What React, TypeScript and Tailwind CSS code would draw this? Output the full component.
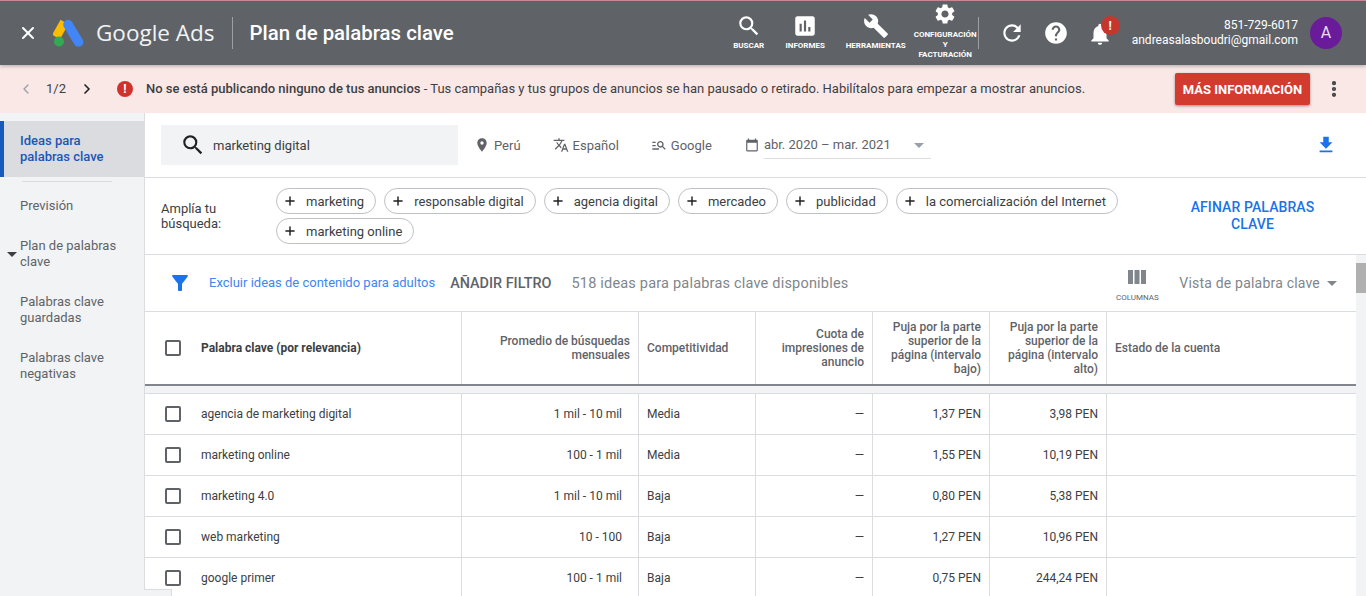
import { ChevronLeft, ChevronRight, EllipsisVertical, Plus, X } from 'lucide-react';
import {
  MdAssessment,
  MdBuild,
  MdCalendarToday,
  MdFileDownload,
  MdFilterAlt,
  MdHelp,
  MdLocationOn,
  MdManageSearch,
  MdNotifications,
  MdRefresh,
  MdSearch,
  MdSettings,
  MdTranslate,
} from 'react-icons/md';

const navTools = [
  { icon: MdSearch, label: 'BUSCAR', w: 'w-[50px]' },
  { icon: MdAssessment, label: 'INFORMES', w: 'w-[63px]' },
  { icon: MdBuild, label: 'HERRAMIENTAS', w: 'w-[78px]' },
];

const sideItems = [
  { label: ['Previsión'], h: 'h-[40px]' },
  { label: ['Plan de palabras', 'clave'], h: 'h-[56px]', caret: true },
  { label: ['Palabras clave', 'guardadas'], h: 'h-[56px]' },
  { label: ['Palabras clave', 'negativas'], h: 'h-[56px]' },
];

const chips = ['marketing', 'responsable digital', 'agencia digital', 'mercadeo', 'publicidad', 'la comercialización del Internet', 'marketing online'];

const rows = [
  ['agencia de marketing digital', '1 mil - 10 mil', 'Media', '1,37 PEN', '3,98 PEN'],
  ['marketing online', '100 - 1 mil', 'Media', '1,55 PEN', '10,19 PEN'],
  ['marketing 4.0', '1 mil - 10 mil', 'Baja', '0,80 PEN', '5,38 PEN'],
  ['web marketing', '10 - 100', 'Baja', '1,27 PEN', '10,96 PEN'],
  ['google primer', '100 - 1 mil', 'Baja', '0,75 PEN', '244,24 PEN'],
];

const gridCols = 'grid grid-cols-[317px_177px_117px_117px_117px_117px_250px]';

function AdsLogo() {
  return (
    <svg width="32" height="28" viewBox="0 0 32 28" className="shrink-0">
      <path d="M11.5 3 L3 18" stroke="#fbbc04" strokeWidth="9" strokeLinecap="butt" />
      <path d="M15 5.5 L25.5 23" stroke="#4285f4" strokeWidth="9.5" strokeLinecap="round" />
      <circle cx="6" cy="22.5" r="5" fill="#34a853" />
    </svg>
  );
}

function ColumnsIcon() {
  return (
    <svg width="18" height="14" viewBox="0 0 18 14" className="text-[#80868b]" fill="currentColor">
      <rect x="0" y="0" width="5" height="14" />
      <rect x="6.5" y="0" width="5" height="14" />
      <rect x="13" y="0" width="5" height="14" />
    </svg>
  );
}

function Checkbox() {
  return <span className="block w-4 h-4 border-2 border-[#5f6368] rounded-[2px] bg-white" />;
}

function TopBar() {
  return (
    <header className="h-[65px] bg-[#5f6368] border-t border-[#c58a93] flex items-center text-white relative z-10 shadow-[0_1px_4px_rgba(60,64,67,0.4)]">
      <X className="ml-[18px] w-5 h-5" strokeWidth={2.4} />
      <div className="ml-[15px]"><AdsLogo /></div>
      <span className="ml-[11px] text-[22.5px] text-[#f1f3f4] font-['Open_Sans',sans-serif]">Google Ads</span>
      <span className="ml-[17px] h-8 w-px bg-[#9aa0a6]" />
      <h1 className="ml-[17px] text-[20.4px] font-medium">Plan de palabras clave</h1>
      <div className="ml-auto flex items-center">
        {navTools.map(t => (
          <div key={t.label} className={`${t.w} flex flex-col items-center -mt-[3px]`}>
            <t.icon className="w-[26px] h-[26px]" />
            <span className="mt-[3px] text-[8px] font-bold leading-none">{t.label}</span>
          </div>
        ))}
        <div className="w-[61px] mr-[2px] flex flex-col items-center -mt-[4px]">
          <MdSettings className="w-[24px] h-[24px]" />
          <span className="mt-[4px] text-[8px] font-bold leading-[10px] text-center">CONFIGURACIÓN<br />Y<br />FACTURACIÓN</span>
        </div>
        <span className="h-8 w-px bg-[#9aa0a6]" />
        <MdRefresh className="ml-[20px] w-[26px] h-[26px]" />
        <MdHelp className="ml-[18px] w-[26px] h-[26px]" />
        <div className="relative ml-[18px] w-[26px] h-[26px]">
          <MdNotifications className="w-[26px] h-[26px] mt-[1px]" />
          <span className="absolute -top-[4px] left-[14px] w-[19px] h-[19px] rounded-full bg-[#c5372c] text-[12px] font-bold flex items-center justify-center">!</span>
        </div>
        <div className="ml-[19px] text-right text-[12px] leading-[15px]">
          <div>851-729-6017</div>
          <div>andreasalasboudri@gmail.com</div>
        </div>
        <span className="ml-[12px] mr-[24px] w-8 h-8 rounded-full bg-[#6a1b9a] flex items-center justify-center text-[16px] text-[#e8dff0]">A</span>
      </div>
    </header>
  );
}

function Banner() {
  return (
    <div className="h-[48px] bg-[#fae8e6] flex items-center text-[13px] text-[#3c4043]">
      <ChevronLeft className="ml-[18px] w-4 h-4 text-[#9aa0a6]" />
      <span className="ml-[12px]">1/2</span>
      <ChevronRight className="ml-[13px] w-4 h-4 text-[#202124]" strokeWidth={2.5} />
      <span className="ml-[22px] w-4 h-4 rounded-full bg-[#d0332b] text-white text-[12px] font-bold flex items-center justify-center">!</span>
      <p className="ml-[13px]"><span className="font-medium">No se está publicando ninguno de tus anuncios</span> - Tus campañas y tus grupos de anuncios se han pausado o retirado. Habilítalos para empezar a mostrar anuncios.</p>
      <button className="ml-auto w-[135px] h-8 pt-[2px] bg-[#d33b2f] rounded-[2px] text-white text-[13px] font-bold shadow-[0_1px_3px_rgba(0,0,0,0.4)]">MÁS INFORMACIÓN</button>
      <EllipsisVertical className="ml-[14px] mr-[22px] w-5 h-5 text-[#3c4043]" strokeWidth={3} />
    </div>
  );
}

function Sidebar() {
  return (
    <aside className="w-[145px] shrink-0 bg-[#f1f3f4] border-r border-[#dadce0] text-[13px] leading-4 text-[#5f6368] pt-2">
      <div className="h-[56px] bg-[#dadce0] border-l-4 border-[#185abc] pl-4 flex flex-col justify-center text-[#1a56b8] font-medium">
        <span>Ideas para</span>
        <span>palabras clave</span>
      </div>
      <div className="mx-[22px] mt-1 w-[90px] h-px bg-[#dadce0]" />
      {sideItems.map(item => (
        <div key={item.label[0]} className={`${item.h} pl-5 pt-[16px] relative`}>
          {item.caret && <span className="absolute left-[7px] top-[30px] border-x-[5px] border-t-[5px] border-x-transparent border-t-[#3c4043]" />}
          {item.label.map(l => <div key={l}>{l}</div>)}
        </div>
      ))}
    </aside>
  );
}

function SearchRow() {
  return (
    <div className="h-[65px] border-b border-[#dadce0] flex items-center text-[13px] text-[#5f6368] pl-4">
      <div className="w-[297px] h-10 bg-[#f1f3f4] flex items-center text-[#3c4043]">
        <MdSearch className="ml-[19px] w-[26px] h-[26px] text-[#202124]" />
        <span className="ml-[7px] mt-[2px]">marketing digital</span>
      </div>
      <MdLocationOn className="ml-[16px] w-4 h-4" />
      <span className="ml-[4px] mt-[2px]">Perú</span>
      <MdTranslate className="ml-[32px] w-4 h-4" />
      <span className="ml-[4px] mt-[2px]">Español</span>
      <MdManageSearch className="ml-[32px] w-4 h-4" />
      <span className="ml-[4px] mt-[2px]">Google</span>
      <MdCalendarToday className="ml-[33px] w-[14px] h-[14px]" />
      <div className="ml-[5px] w-[167px] h-[26px] border-b border-[#dadce0] flex items-center justify-between mt-[1px]">
        <span className="-mt-[1px]">abr. 2020 – mar. 2021</span>
        <span className="mr-[7px] border-x-[5px] border-t-[5px] border-x-transparent border-t-[#9aa0a6]" />
      </div>
      <MdFileDownload className="ml-auto mr-[29px] w-[22px] h-[22px] text-[#1a73e8]" />
    </div>
  );
}

function ExpandRow() {
  return (
    <div className="h-[77px] border-b border-[#dadce0] flex text-[13px] text-[#3c4043]">
      <div className="w-[131px] pl-4 pt-[23px] leading-[15px] shrink-0">Amplía tu<br />búsqueda:</div>
      <div className="w-[860px] flex flex-wrap content-start gap-x-2 gap-y-[4px] pt-[10px]">
        {chips.map(c => (
          <span key={c} className="h-[26px] pl-[6px] pr-[11px] rounded-full border border-[#bdc1c6] flex items-center">
            <Plus className="w-[14px] h-[14px] text-[#202124]" strokeWidth={2.5} />
            <span className="ml-[9px] mt-[2px]">{c}</span>
          </span>
        ))}
      </div>
      <div className="w-[175px] ml-[29px] pt-[21px] text-center text-[#1a73e8] text-[14px] leading-[17px] font-medium tracking-[0.1px]">AFINAR PALABRAS<br />CLAVE</div>
    </div>
  );
}

function FilterRow() {
  return (
    <div className="h-[56px] flex items-center pr-[10px]">
      <MdFilterAlt className="ml-[23px] w-6 h-6 text-[#1a73e8]" />
      <span className="ml-[17px] text-[13px] text-[#4285f4]">Excluir ideas de contenido para adultos</span>
      <span className="ml-[15px] mt-[2px] text-[14.4px] font-medium text-[#5f6368]">AÑADIR FILTRO</span>
      <span className="ml-[20px] mt-[2px] text-[14.5px] text-[#80868b] tracking-[0.2px]">518 ideas para palabras clave disponibles</span>
      <div className="ml-auto w-[60px] flex flex-col items-center mt-[6px]">
        <ColumnsIcon />
        <span className="mt-[9px] text-[8px] text-[#5f6368] leading-[10px]">COLUMNAS</span>
      </div>
      <span className="ml-[12px] text-[14px] text-[#80868b] tracking-[0.2px]">Vista de palabra clave</span>
      <span className="ml-[7px] mr-[19px] border-x-[5px] border-t-[5px] border-x-transparent border-t-[#80868b]" />
    </div>
  );
}

function KeywordTable() {
  const th = 'border-r border-[#dadce0] px-2 flex items-center text-[12px] leading-[14px] text-[#5f6368] font-medium text-right justify-end';
  const td = 'border-r border-[#dadce0] flex items-center text-[12px] text-[#3c4043]';
  return (
    <div className="text-[12px]">
      <div className={`${gridCols} h-[75px] border-y border-[#dadce0] border-b-[2px] border-b-[#80868b]`}>
        <div className="border-r border-[#dadce0] flex items-center">
          <span className="ml-[20px]"><Checkbox /></span>
          <span className="ml-[20px] font-bold text-[#3c4043]">Palabra clave (por relevancia)</span>
        </div>
        <div className={th}><span>Promedio de búsquedas<br />mensuales</span></div>
        <div className={`${th} !justify-start`}>Competitividad</div>
        <div className={th}>Cuota de<br />impresiones de<br />anuncio</div>
        <div className={th}>Puja por la parte<br />superior de la<br />página (intervalo<br />bajo)</div>
        <div className={th}>Puja por la parte<br />superior de la<br />página (intervalo<br />alto)</div>
        <div className="flex items-center px-2 font-medium text-[#5f6368]">Estado de la cuenta</div>
      </div>
      <div className="h-2 bg-[#f1f3f4] border-b border-[#dadce0]" />
      {rows.map(r => (
        <div key={r[0]} className={`${gridCols} h-[41px] border-b border-[#dadce0]`}>
          <div className={td}>
            <span className="ml-[20px]"><Checkbox /></span>
            <span className="ml-[20px]">{r[0]}</span>
          </div>
          <div className={`${td} justify-end pr-4`}>{r[1]}</div>
          <div className={`${td} pl-2`}>{r[2]}</div>
          <div className={`${td} justify-end pr-2`}>—</div>
          <div className={`${td} justify-end pr-2`}>{r[3]}</div>
          <div className={`${td} justify-end pr-2`}>{r[4]}</div>
          <div />
        </div>
      ))}
    </div>
  );
}

export default function App() {
  return (
    <div className="w-[1366px] h-[596px] overflow-hidden bg-white font-['Roboto',sans-serif] flex flex-col">
      <TopBar />
      <Banner />
      <div className="flex flex-1 min-h-0 relative">
        <Sidebar />
        <main className="flex-1 min-w-0 flex flex-col overflow-hidden">
          <SearchRow />
          <ExpandRow />
          <div className="relative flex-1 min-h-0 overflow-hidden">
            <FilterRow />
            <KeywordTable />
            <div className="absolute right-0 top-0 bottom-0 w-[10px] bg-[#f1f3f4]">
              <div className="mt-[8px] h-[30px] bg-[#b0b0b0]" />
            </div>
          </div>
        </main>
        <div className="absolute left-[144px] bottom-0 w-[28px] h-[7px] bg-[#f1f3f4] border-t border-r border-[#dadce0]" />
      </div>
    </div>
  );
}
